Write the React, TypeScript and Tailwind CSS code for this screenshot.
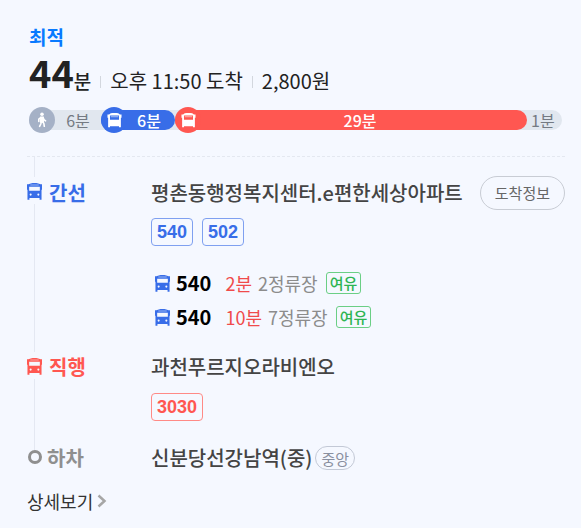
import React from 'react';

function BusIcon({ className }: { className: string }) {
  return (
    <svg viewBox="0 0 16 18" className={className} fill="currentColor" aria-hidden="true">
      <path
        fillRule="evenodd"
        d="M4 .4C6.500-.1 9.500-.1 12 .4L14.500 1.300H16V7H15.500V17.700H13.400V16H2.600V17.700H.5V7H0V1.300H1.500ZM3.500 1.800V2.400H12.500V1.800ZM2.300 4V8.200H13.700V4ZM2.800 12.300a1.100 1.100 0 1 0 2.200 0a1.100 1.100 0 1 0-2.200 0ZM11 12.300a1.100 1.100 0 1 0 2.200 0a1.100 1.100 0 1 0-2.200 0Z"
      />
    </svg>
  );
}

function SolidBusIcon() {
  return (
    <svg viewBox="0 0 16 16" className="h-[15px] w-[15px]" fill="currentColor" aria-hidden="true">
      <path
        fillRule="evenodd"
        d="M4 .3C6.500-.1 9.500-.1 12 .3L13.800 1.500H15.500V5H14.800V15.200H12.800V14H3.200V15.200H1.200V5H.5V1.500H2.200ZM3.200 2.700V7.300H12.800V2.700Z"
      />
      <path d="M4 3.500h8v1H4Z" opacity=".6" />
    </svg>
  );
}

function WalkIcon() {
  return (
    <svg viewBox="0 0 12 16" className="h-4 w-3" aria-hidden="true">
      <circle cx="6" cy="2.200" r="1.800" fill="#fff" />
      <path
        d="M5 5.500L2.800 7.200v2.300M7 5.500l1.200 2.300 1.400 1M5.300 9.500L4.800 12l-1.200 2.300M6.600 9.500l1.300 2.200.4 2.600"
        fill="none"
        stroke="#fff"
        strokeWidth="1.600"
        strokeLinecap="round"
        strokeLinejoin="round"
      />
      <path d="M4.200 4.500h3.600l.3 6.200H3.900Z" fill="#fff" />
    </svg>
  );
}

function RouteBar() {
  return (
    <div className="ml-[2px] mr-[3px] mt-[10px] flex h-[26px] items-center text-base leading-5">
      <div className="flex h-5 w-full rounded-full bg-[#e1e7ef] text-[#747a83]">
        <div className="flex flex-[72] items-center">
          <span className="flex size-[26px] shrink-0 items-center justify-center rounded-full bg-[#a5b1c6]">
            <WalkIcon />
          </span>
          <span className="flex-1 text-center">6분</span>
        </div>
        <div className="flex flex-[74] items-center rounded-full bg-[#386de8] font-medium text-white">
          <span className="flex size-[26px] shrink-0 items-center justify-center rounded-full bg-[#386de8]">
            <SolidBusIcon />
          </span>
          <span className="flex-1 pr-1 text-center">6분</span>
        </div>
        <div className="flex flex-[352] items-center rounded-full bg-[#ff5751] font-medium text-white">
          <span className="flex size-[26px] shrink-0 items-center justify-center rounded-full bg-[#ff5751]">
            <SolidBusIcon />
          </span>
          <span className="flex-1 pr-2 text-center">29분</span>
        </div>
        <div className="flex flex-[35] items-center whitespace-nowrap">
          <span className="pl-1">1분</span>
        </div>
      </div>
    </div>
  );
}

function BusBadge({ number, className }: { number: string; className: string }) {
  return (
    <span
      className={`flex h-7 items-center rounded-[4px] border px-[5px] font-['Liberation_Sans',Arial,sans-serif] text-lg font-bold ${className}`}
    >
      {number}
    </span>
  );
}

const arrivals = [
  { bus: '540', time: '2분', stops: '2정류장', seats: '여유' },
  { bus: '540', time: '10분', stops: '7정류장', seats: '여유' },
];

function App() {
  return (
    <main className="min-h-screen bg-[#f5f8ff] pb-4 pl-[27px] pr-4 pt-[25px] font-['Noto_Sans_CJK_KR',sans-serif] text-[#222]">
      <h1 className="ml-[2px] text-[19px] font-bold leading-6 text-[#087aff]">최적</h1>

      <div className="ml-[2px] mt-[3px] flex h-[45px] items-end whitespace-nowrap text-xl leading-8">
        <strong className="mb-[5px] text-[38px] font-bold leading-10">44</strong>
        <span className="text-[19px] font-medium leading-8">분</span>
        <span className="mx-[9px] mb-[9px] h-3 w-px bg-[#d3d7de]" />
        <span>오후 11:50 도착</span>
        <span className="mx-[9px] mb-[9px] h-3 w-px bg-[#d3d7de]" />
        <span>2,800원</span>
      </div>

      <RouteBar />

      <ol className="mt-[23px] border-t border-dashed border-[#e4e8f0] text-xl">
        {/* First ride */}
        <li className="flex">
          <div className="flex w-[15px] shrink-0 flex-col items-center">
            <span className="h-5 w-px bg-[#e4e8f2]" />
            <BusIcon className="mb-1 mt-[6px] h-[17px] w-[15px] text-[#386de8]" />
            <span className="w-px flex-1 bg-[#e4e8f2]" />
          </div>
          <div className="ml-[7px] mt-[19px] w-[102px] shrink-0 font-bold leading-[34px] text-[#386de8]">간선</div>
          <div className="min-w-0 flex-1 pb-[18px] pt-[19px]">
            <div className="flex items-center justify-between whitespace-nowrap">
              <h2 className="font-medium leading-[34px] text-[#444]">평촌동행정복지센터.e편한세상아파트</h2>
              <button
                type="button"
                className="h-[34px] shrink-0 rounded-full border border-[#c8ccd4] px-[14px] text-[15px] leading-5 text-[#666]"
              >
                도착정보
              </button>
            </div>
            <div className="mt-2 flex gap-[9px]">
              <BusBadge number="540" className="border-[#7fa0f0] text-[#386de8]" />
              <BusBadge number="502" className="border-[#7fa0f0] text-[#386de8]" />
            </div>
            <ul className="mt-5">
              {arrivals.map((item) => (
                <li key={item.time} className="flex h-[34px] items-center whitespace-nowrap pl-1 text-lg">
                  <BusIcon className="mr-[6px] h-[17px] w-[15px] text-[#386de8]" />
                  <strong className="text-xl font-bold text-black">{item.bus}</strong>
                  <span className="ml-[14px] text-[#f04b4b]">{item.time}</span>
                  <span className="ml-[6px] text-[#8c8c8c]">{item.stops}</span>
                  <span className="ml-2 flex h-[22px] items-center rounded-[3px] border border-[#6bcf85] px-[3px] text-[15px] font-medium text-[#2eb552]">
                    {item.seats}
                  </span>
                </li>
              ))}
            </ul>
          </div>
        </li>

        {/* Second ride */}
        <li className="flex">
          <div className="flex w-[15px] shrink-0 flex-col items-center">
            <BusIcon className="mb-1 mt-[6px] h-[17px] w-[15px] text-[#ff5751]" />
            <span className="w-px flex-1 bg-[#e4e8f2]" />
          </div>
          <div className="ml-[7px] w-[102px] shrink-0 font-bold leading-[30px] text-[#ff5751]">직행</div>
          <div className="min-w-0 flex-1 pb-6">
            <h2 className="font-medium leading-[30px] text-[#444]">과천푸르지오라비엔오</h2>
            <div className="mt-[11px] flex">
              <BusBadge number="3030" className="border-[#ff8a86] text-[#ff5751]" />
            </div>
          </div>
        </li>

        {/* Getting off */}
        <li className="flex">
          <div className="flex w-[15px] shrink-0 flex-col items-center">
            <span className="h-[5px] w-px bg-[#e4e8f2]" />
            <span className="size-[14px] rounded-full border-[3px] border-[#8f8f8f]" />
          </div>
          <div className="ml-[5px] w-[104px] shrink-0 font-bold leading-[26px] text-[#8f8f8f]">하차</div>
          <div className="flex items-center whitespace-nowrap">
            <h2 className="font-medium leading-[26px] text-[#444]">신분당선강남역(중)</h2>
            <span className="ml-[3px] flex h-6 items-center rounded-full border border-[#c3c9d6] px-[5px] text-[15px] text-[#8a90a0]">
              중앙
            </span>
          </div>
        </li>
      </ol>

      <button type="button" className="mt-4 flex items-center text-lg leading-7 text-[#333]">
        상세보기
        <svg viewBox="0 0 10 14" className="ml-1 h-[14px] w-[10px]" fill="none" stroke="#a6a6a6" strokeWidth="2.500" aria-hidden="true">
          <path d="M1.500 1.500L7.500 7L1.500 12.500" />
        </svg>
      </button>
    </main>
  );
}

export default App;
